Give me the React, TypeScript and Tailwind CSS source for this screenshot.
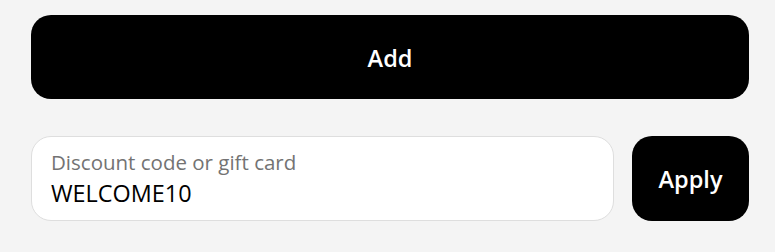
import React from "react";

export default function App() {
  return (
    <div
      className="w-[775px] h-[252px] bg-[#f4f4f4] pl-[31px] pr-[26px] pt-[15px] flex flex-col gap-[37px]"
      style={{ fontFamily: '"Open Sans", "Noto Sans", sans-serif' }}
    >
      <button className="h-[84px] w-full rounded-[20px] bg-black text-white text-[23.5px] font-semibold flex items-center justify-center pt-[3px]">
        Add
      </button>
      <div className="flex gap-[18px] h-[85px]">
        <div className="flex-1 bg-white border border-[#dedede] rounded-[20px] pl-[19px] pt-[11px] flex flex-col">
          <span className="text-[20.5px] leading-[28px] text-[#737373]">Discount code or gift card</span>
          <span className="text-[23.4px] leading-[34px] text-black">WELCOME10</span>
        </div>
        <button className="w-[117px] rounded-[20px] bg-black text-white text-[23.5px] font-semibold flex items-center justify-center pt-[3px]">
          Apply
        </button>
      </div>
    </div>
  );
}
